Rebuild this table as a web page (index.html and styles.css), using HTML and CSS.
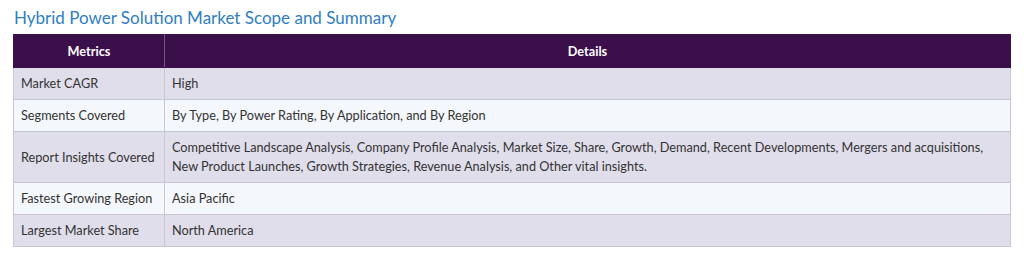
FILE: index.html
```html
<!DOCTYPE html>
<html>
<head>
<meta charset="utf-8">
<link rel="stylesheet" href="styles.css">
</head>
<body>
<div class="wrap">
  <h2 class="title">Hybrid Power Solution Market Scope and Summary</h2>
  <table class="scope">
    <thead>
      <tr><th class="c1">Metrics</th><th>Details</th></tr>
    </thead>
    <tbody>
      <tr class="odd"><td class="c1">Market CAGR</td><td>High</td></tr>
      <tr class="even"><td class="c1">Segments Covered</td><td>By Type, By Power Rating, By Application, and By Region</td></tr>
      <tr class="odd"><td class="c1">Report Insights Covered</td><td>Competitive Landscape Analysis, Company Profile Analysis, Market Size, Share, Growth, Demand, Recent Developments, Mergers and acquisitions, New Product Launches, Growth Strategies, Revenue Analysis, and Other vital insights.</td></tr>
      <tr class="even"><td class="c1">Fastest Growing Region</td><td>Asia Pacific</td></tr>
      <tr class="odd"><td class="c1">Largest Market Share</td><td>North America</td></tr>
    </tbody>
  </table>
</div>
</body>
</html>
```

FILE: styles.css
```css
html, body {
  margin: 0;
  padding: 0;
  background: #ffffff;
}
.wrap {
  padding: 7px 13px 0 13px;
  width: 998px;
  font-family: Lato, "Open Sans", sans-serif;
}
.title {
  margin: 0 0 6px 1px;
  font-size: 17px;
  font-weight: 400;
  line-height: 21px;
  color: #2f7ec2;
}
.scope {
  width: 998px;
  border-collapse: collapse;
  font-size: 12.7px;
  line-height: 19px;
  color: #333333;
}
.scope th {
  background: #3b0f4a;
  color: #ffffff;
  font-weight: 700;
  text-align: center;
  height: 20px;
  padding: 6px 8px;
  border: 1px solid #3b0f4a;
  border-right-color: #6e5a78;
}
.scope th:last-child {
  border-right-color: #3b0f4a;
}
.scope td {
  padding: 6px 7px;
  border: 1px solid #c9c6d3;
  text-align: left;
  vertical-align: middle;
}
.scope .c1 {
  width: 134px;
  white-space: nowrap;
}
.odd td {
  background: #e1deec;
}
.even td {
  background: #f4f7fb;
}
```
